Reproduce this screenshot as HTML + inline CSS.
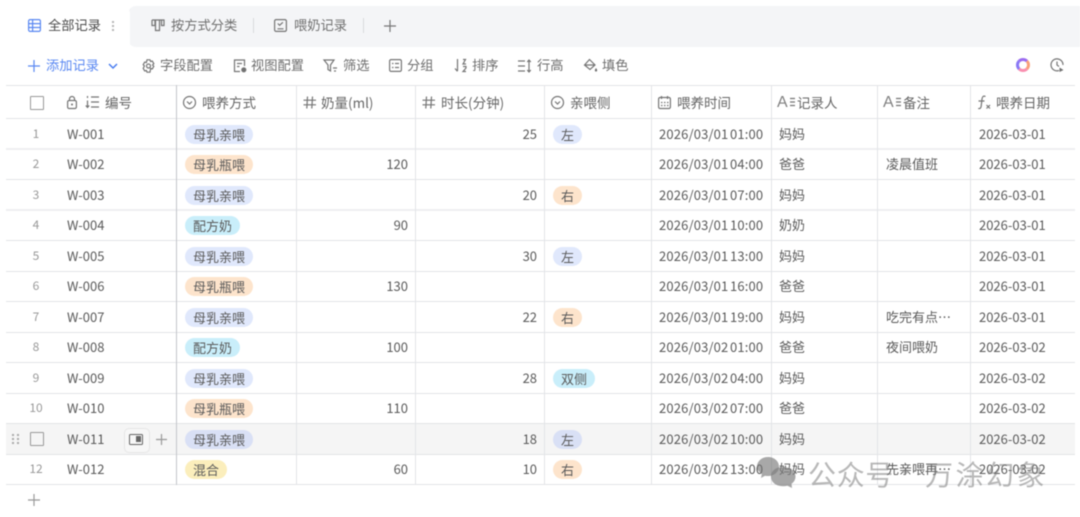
<!DOCTYPE html>
<html><head><meta charset="utf-8">
<style>
html,body{margin:0;padding:0;background:#fff}
body{width:1080px;height:517px;overflow:hidden;position:relative;font-family:"Liberation Sans","Noto Sans CJK SC",sans-serif;font-size:13px;color:#555}
#w{position:absolute;left:0;top:0;width:1080px;height:517px;filter:blur(.45px)}
.a{position:absolute;white-space:nowrap}
.h{position:absolute;left:6px;width:1069px;height:1px;background:#e3e4e7}
.l{height:2px;background:#eeeff1}
.v{position:absolute;top:85px;height:400px;width:1px;background:#e3e4e7}
.t{position:absolute;white-space:nowrap;line-height:18px;height:18px;color:#5a5a5a;font-family:"Noto Sans CJK SC",sans-serif;font-size:13px}
.k{font-size:13.5px;color:#666}
.m{font-size:13.25px;color:#666}
.d{letter-spacing:.15px;word-spacing:-1.5px}
.n{color:#999;font-size:12px;text-align:center;width:24px;left:24px}
.r{text-align:right;width:60px}
.p{position:absolute;height:19px;line-height:19px;border-radius:10px;padding:0 8px;color:#5a5a5a;font-family:"Noto Sans CJK SC",sans-serif;font-size:13px;white-space:nowrap}
.b{background:#e0e8fc}.o{background:#fde4cc}.c{background:#c9eefa}.y{background:#fbeebc}
.tb{position:absolute;top:56px;height:18px;line-height:18px;color:#6e6e6e;font-family:"Noto Sans CJK SC",sans-serif;font-size:13.25px;white-space:nowrap}
.A{position:absolute;top:94px;line-height:18px;font-family:"Liberation Sans",sans-serif;font-size:16px;color:#808080}
svg{position:absolute;overflow:visible;fill:none;stroke:#757575;stroke-width:1.2}
</style></head><body><div id="w">

<!-- tab bar -->
<div class="a" style="left:128px;top:6px;width:952px;height:41px;background:#f4f5f7;border-radius:8px 0 0 8px"></div>
<div class="a" style="left:0;top:6px;width:130px;height:41px;background:#fff;border-radius:0 8px 0 0"></div>
<svg style="left:28px;top:19px" width="13" height="13" viewBox="0 0 13 13"><rect x=".6" y=".6" width="11.800" height="11.800" rx="1.500" stroke="#5a88f2"/><path d="M.6 4.600h11.800M.6 8.500h11.800M4.600 .6v11.800" stroke="#5a88f2"/></svg>
<div class="t m" style="left:48px;top:16px;color:#4c4c4c">全部记录</div>
<div class="a" style="left:112px;top:21px;width:2px;height:2px;background:#b5b5b5;box-shadow:0 4px #b5b5b5,0 8px #b5b5b5"></div>
<svg style="left:151px;top:19px" width="14" height="13" viewBox="0 0 14 13"><path d="M1 1h12v5.500h-2.500V1M1 1v5.500h3V1M4.500 1v10.500h4V1"/></svg>
<div class="t m" style="left:171px;top:16px;color:#707070">按方式分类</div>
<div class="a" style="left:253px;top:18px;width:1px;height:15px;background:#d8d9dc"></div>
<svg style="left:274px;top:19px" width="13" height="13" viewBox="0 0 13 13"><rect x=".6" y=".6" width="11.800" height="11.800" rx="1.500"/><path d="M3.500 9.800h6M3.800 4.500l1.800 1.800 3.300-3"/></svg>
<div class="t m" style="left:294px;top:16px;color:#707070">喂奶记录</div>
<div class="a" style="left:363px;top:18px;width:1px;height:15px;background:#d8d9dc"></div>
<svg style="left:384px;top:20px" width="12" height="12" viewBox="0 0 12 12"><path d="M6 0v12M0 6h12" stroke="#777"/></svg>

<!-- toolbar -->
<svg style="left:28px;top:60px" width="12" height="12" viewBox="0 0 12 12"><path d="M6 0v12M0 6h12" stroke="#5a88f2"/></svg>
<div class="tb" style="left:46px;color:#5a88f2">添加记录</div>
<svg style="left:108px;top:63px" width="10" height="6" viewBox="0 0 10 6"><path d="M1 1l4 4 4-4" stroke="#4a7df0" stroke-width="1.500"/></svg>
<svg style="left:142px;top:59px" width="13" height="14" viewBox="0 0 13 14"><path d="M5 .8h3l.6 1.700 1.700-.4 1.500 2.600-1.200 1.300 1.200 1.300-1.500 2.600-1.700-.4L8 13.200H5l-.6-1.700-1.700.4-1.500-2.600L2.400 7 1.200 5.700l1.500-2.600 1.700.4z"/><circle cx="6.500" cy="7" r="2"/></svg>
<div class="tb" style="left:160px">字段配置</div>
<svg style="left:233px;top:59px" width="14" height="14" viewBox="0 0 14 14"><path d="M7 12.500H1.500V1h10v6M4 4.500h5M4 7.500h2.500"/><circle cx="10.800" cy="10.800" r="2" fill="#707070"/></svg>
<div class="tb" style="left:251px">视图配置</div>
<svg style="left:323px;top:59px" width="15" height="14" viewBox="0 0 15 14"><path d="M1 1h10L7.500 6v6L5 10.500V6zM10 9h4M11 12h2"/></svg>
<div class="tb" style="left:343px">筛选</div>
<svg style="left:389px;top:59px" width="13" height="13" viewBox="0 0 13 13"><rect x=".6" y=".6" width="11.800" height="11.800" rx="1.500"/><path d="M3 4.500h1.500M6 4.500h4M3 8.500h1.500M6 8.500h4"/></svg>
<div class="tb" style="left:407px">分组</div>
<svg style="left:454px;top:58px" width="14" height="15" viewBox="0 0 14 15"><path d="M3.500 1v12M1 10.500l2.500 2.800M9 1.500h2.500l-2.500 4.500h3M9 8.500h3v1.500l-3 3.500h3"/></svg>
<div class="tb" style="left:472px">排序</div>
<svg style="left:518px;top:59px" width="14" height="14" viewBox="0 0 14 14"><path d="M0 2h7M0 7h7M0 12h7M11 1v12M9.200 3L11 1l1.800 2M9.200 11l1.800 2 1.800-2"/></svg>
<div class="tb" style="left:537px">行高</div>
<svg style="left:583px;top:58px" width="15" height="15" viewBox="0 0 15 15"><path d="M6.500 1.500l5.500 5.500-5 4.500L1.500 7zM1.500 7h10.500"/><path d="M13 10c.8 1.200 1.200 1.800 1.200 2.400a1.200 1.200 0 0 1-2.400 0c0-.6.400-1.200 1.200-2.400z" fill="#707070" stroke="none"/></svg>
<div class="tb" style="left:602px">填色</div>
<div class="a" style="left:1016px;top:58px;width:8px;height:8px;border-radius:50%;border:3.500px solid;border-color:#9b6cf0 #f9a07a #f98fb0 #8a78f5"></div>
<svg style="left:1050px;top:58px" width="14" height="15" viewBox="0 0 14 15"><path d="M9 12.500A6 6 0 1 1 13 7M7 3.500V7l2 1.500"/><path d="M9.500 9.500l4 2.500-4 2z" fill="#707070" stroke="none"/></svg>

<!-- row 11 highlight -->
<div class="a" style="left:6px;top:424px;width:1069px;height:30px;background:#f5f5f5"></div>

<!-- grid -->
<div class="h" style="top:85px"></div><div class="h" style="top:118px"></div>
<div class="h l" style="top:148px"></div><div class="h" style="top:179px"></div>
<div class="h l" style="top:209px"></div><div class="h" style="top:240px"></div>
<div class="h" style="top:271px"></div><div class="h" style="top:301px"></div>
<div class="h" style="top:332px"></div><div class="h" style="top:362px"></div>
<div class="h" style="top:393px"></div><div class="h" style="top:423px"></div>
<div class="h" style="top:454px"></div><div class="h" style="top:484px"></div>
<div class="v" style="left:176px;background:#c3c5ca"></div>
<div class="v" style="left:296px"></div><div class="v" style="left:415px"></div>
<div class="v" style="left:544px"></div><div class="v" style="left:651px"></div>
<div class="v" style="left:771px"></div><div class="v" style="left:877px"></div>
<div class="v" style="left:970px"></div>

<!-- header -->
<div class="a" style="left:30px;top:96px;width:12px;height:12px;border:1.300px solid #999;border-radius:1px"></div>
<svg style="left:67px;top:96px" width="10" height="13" viewBox="0 0 10 13"><rect x=".6" y="4.500" width="8.800" height="8" rx="1.500"/><path d="M2.500 4.500V3a2.500 2.500 0 0 1 5 0v1.500"/><circle cx="5" cy="8.500" r="1" fill="#707070" stroke="none"/></svg>
<svg style="left:85px;top:95px" width="15" height="14" viewBox="0 0 15 14"><path d="M2.500 1v2M2.500 5.500v7M.8 10.500l1.700 2 1.700-2M6 2h8M6 7h8M6 12h8"/></svg>
<div class="t k" style="left:105px;top:93px">编号</div>
<svg style="left:183px;top:96px" width="13" height="13" viewBox="0 0 13 13"><circle cx="6.500" cy="6.500" r="6"/><path d="M4 5.500l2.500 2.500L9 5.500"/></svg>
<div class="t k" style="left:202px;top:93px">喂养方式</div>
<svg style="left:303px;top:96px" width="13" height="13" viewBox="0 0 13 13"><path d="M4.500 .5L3.800 12.500M9.500 .5L8.800 12.500M.5 4.200h12.500M.5 8.800h12.500"/></svg>
<div class="t k" style="left:321px;top:93px">奶量(ml)</div>
<svg style="left:422px;top:96px" width="13" height="13" viewBox="0 0 13 13"><path d="M4.500 .5L3.800 12.500M9.500 .5L8.800 12.500M.5 4.200h12.500M.5 8.800h12.500"/></svg>
<div class="t k" style="left:441px;top:93px">时长(分钟)</div>
<svg style="left:551px;top:96px" width="13" height="13" viewBox="0 0 13 13"><circle cx="6.500" cy="6.500" r="6"/><path d="M4 5.500l2.500 2.500L9 5.500"/></svg>
<div class="t k" style="left:570px;top:93px">亲喂侧</div>
<svg style="left:658px;top:96px" width="13" height="13" viewBox="0 0 13 13"><rect x=".6" y="1.500" width="11.800" height="11" rx="1.500"/><path d="M3.500 0v3M9.500 0v3M3 6.500h1.500M6 6.500h1.500M9 6.500h1.500M3 9.500h1.500M6 9.500h1.500M9 9.500h1.500"/></svg>
<div class="t k" style="left:677px;top:93px">喂养时间</div>
<div class="A" style="left:777px">A</div><svg style="left:789px;top:97px" width="7" height="10" viewBox="0 0 7 10"><path d="M1 1.500h5M1 5h5M1 8.500h5"/></svg>
<div class="t k" style="left:797px;top:93px">记录人</div>
<div class="A" style="left:883px">A</div><svg style="left:895px;top:97px" width="7" height="10" viewBox="0 0 7 10"><path d="M1 1.500h5M1 5h5M1 8.500h5"/></svg>
<div class="t k" style="left:903px;top:93px">备注</div>
<svg style="left:977px;top:95px" width="15" height="15" viewBox="0 0 15 15"><path d="M8.500 1.500C6.500 .5 5.300 1.500 5 4L4.200 11c-.2 2-1 2.800-3 2.500M1.500 6h6M9.500 10l3.500 3.500M13 10l-3.500 3.500"/></svg>
<div class="t k" style="left:996px;top:93px">喂养日期</div>

<!-- row 1 -->
<div class="t n" style="top:125px">1</div><div class="t" style="left:67px;top:125px">W-001</div><div class="p b" style="left:185px;top:125px">母乳亲喂</div><div class="t r" style="left:477px;top:125px">25</div><div class="p b" style="left:553px;top:125px">左</div><div class="t d" style="left:659px;top:125px">2026/03/01 01:00</div><div class="t" style="left:779px;top:125px">妈妈</div><div class="t" style="left:979px;top:125px">2026-03-01</div>
<!-- row 2 -->
<div class="t n" style="top:155px">2</div><div class="t" style="left:67px;top:155px">W-002</div><div class="p o" style="left:185px;top:155px">母乳瓶喂</div><div class="t r" style="left:348px;top:155px">120</div><div class="t d" style="left:659px;top:155px">2026/03/01 04:00</div><div class="t" style="left:779px;top:155px">爸爸</div><div class="t" style="left:886px;top:155px">凌晨值班</div><div class="t" style="left:979px;top:155px">2026-03-01</div>
<!-- row 3 -->
<div class="t n" style="top:186px">3</div><div class="t" style="left:67px;top:186px">W-003</div><div class="p b" style="left:185px;top:186px">母乳亲喂</div><div class="t r" style="left:477px;top:186px">20</div><div class="p o" style="left:553px;top:186px">右</div><div class="t d" style="left:659px;top:186px">2026/03/01 07:00</div><div class="t" style="left:779px;top:186px">妈妈</div><div class="t" style="left:979px;top:186px">2026-03-01</div>
<!-- row 4 -->
<div class="t n" style="top:216px">4</div><div class="t" style="left:67px;top:216px">W-004</div><div class="p c" style="left:185px;top:216px">配方奶</div><div class="t r" style="left:348px;top:216px">90</div><div class="t d" style="left:659px;top:216px">2026/03/01 10:00</div><div class="t" style="left:779px;top:216px">奶奶</div><div class="t" style="left:979px;top:216px">2026-03-01</div>
<!-- row 5 -->
<div class="t n" style="top:247px">5</div><div class="t" style="left:67px;top:247px">W-005</div><div class="p b" style="left:185px;top:247px">母乳亲喂</div><div class="t r" style="left:477px;top:247px">30</div><div class="p b" style="left:553px;top:247px">左</div><div class="t d" style="left:659px;top:247px">2026/03/01 13:00</div><div class="t" style="left:779px;top:247px">妈妈</div><div class="t" style="left:979px;top:247px">2026-03-01</div>
<!-- row 6 -->
<div class="t n" style="top:277px">6</div><div class="t" style="left:67px;top:277px">W-006</div><div class="p o" style="left:185px;top:277px">母乳瓶喂</div><div class="t r" style="left:348px;top:277px">130</div><div class="t d" style="left:659px;top:277px">2026/03/01 16:00</div><div class="t" style="left:779px;top:277px">爸爸</div><div class="t" style="left:979px;top:277px">2026-03-01</div>
<!-- row 7 -->
<div class="t n" style="top:308px">7</div><div class="t" style="left:67px;top:308px">W-007</div><div class="p b" style="left:185px;top:308px">母乳亲喂</div><div class="t r" style="left:477px;top:308px">22</div><div class="p o" style="left:553px;top:308px">右</div><div class="t d" style="left:659px;top:308px">2026/03/01 19:00</div><div class="t" style="left:779px;top:308px">妈妈</div><div class="t" style="left:886px;top:308px">吃完有点…</div><div class="t" style="left:979px;top:308px">2026-03-01</div>
<!-- row 8 -->
<div class="t n" style="top:338px">8</div><div class="t" style="left:67px;top:338px">W-008</div><div class="p c" style="left:185px;top:338px">配方奶</div><div class="t r" style="left:348px;top:338px">100</div><div class="t d" style="left:659px;top:338px">2026/03/02 01:00</div><div class="t" style="left:779px;top:338px">爸爸</div><div class="t" style="left:886px;top:338px">夜间喂奶</div><div class="t" style="left:979px;top:338px">2026-03-02</div>
<!-- row 9 -->
<div class="t n" style="top:369px">9</div><div class="t" style="left:67px;top:369px">W-009</div><div class="p b" style="left:185px;top:369px">母乳亲喂</div><div class="t r" style="left:477px;top:369px">28</div><div class="p c" style="left:553px;top:369px">双侧</div><div class="t d" style="left:659px;top:369px">2026/03/02 04:00</div><div class="t" style="left:779px;top:369px">妈妈</div><div class="t" style="left:979px;top:369px">2026-03-02</div>
<!-- row 10 -->
<div class="t n" style="top:399px">10</div><div class="t" style="left:67px;top:399px">W-010</div><div class="p o" style="left:185px;top:399px">母乳瓶喂</div><div class="t r" style="left:348px;top:399px">110</div><div class="t d" style="left:659px;top:399px">2026/03/02 07:00</div><div class="t" style="left:779px;top:399px">爸爸</div><div class="t" style="left:979px;top:399px">2026-03-02</div>
<!-- row 11 -->
<div class="a" style="left:12px;top:434px;width:2px;height:2px;background:#aaa;box-shadow:5px 0 #aaa,0 4px #aaa,5px 4px #aaa,0 8px #aaa,5px 8px #aaa"></div>
<div class="a" style="left:30px;top:432px;width:12px;height:12px;border:1.300px solid #999;border-radius:1px"></div>
<div class="t" style="left:67px;top:430px">W-011</div>
<div class="a" style="left:124px;top:428px;width:24px;height:23px;background:#f7f7f7;border:1px solid #e6e6e6;border-radius:5px"></div>
<div class="a" style="left:129px;top:434px;width:12px;height:9px;border:1.300px solid #666;border-radius:1.500px"></div>
<div class="a" style="left:136px;top:436px;width:5px;height:6px;background:#666"></div>
<svg style="left:156px;top:434px" width="11" height="11" viewBox="0 0 11 11"><path d="M5.500 0v11M0 5.500h11" stroke="#999"/></svg>
<div class="p b" style="left:185px;top:430px;background:#d9e0f5">母乳亲喂</div><div class="t r" style="left:477px;top:430px">18</div><div class="p b" style="left:553px;top:430px;background:#d9e0f5">左</div><div class="t d" style="left:659px;top:430px">2026/03/02 10:00</div><div class="t" style="left:779px;top:430px">妈妈</div><div class="t" style="left:979px;top:430px">2026-03-02</div>
<!-- row 12 -->
<div class="t n" style="top:460px">12</div><div class="t" style="left:67px;top:460px">W-012</div><div class="p y" style="left:185px;top:460px">混合</div><div class="t r" style="left:348px;top:460px">60</div><div class="t r" style="left:477px;top:460px">10</div><div class="p o" style="left:553px;top:460px">右</div><div class="t d" style="left:659px;top:460px">2026/03/02 13:00</div><div class="t" style="left:779px;top:460px">妈妈</div><div class="t" style="left:886px;top:460px">先亲喂再…</div><div class="t" style="left:979px;top:460px">2026-03-02</div>

<svg style="left:28px;top:494px" width="12" height="12" viewBox="0 0 12 12"><path d="M6 0v12M0 6h12" stroke="#999"/></svg>

<!-- watermark -->
<svg style="left:757px;top:457px;stroke:none" width="39" height="32" viewBox="0 0 39 32"><path d="M11 0c6 0 11 4 11 9.500S17 19 11 19c-1 0-2 0-3-.3L4 21l.8-4C2 15 0 12.500 0 9.500 0 4 5 0 11 0z" fill="rgba(115,115,115,.62)"/><path d="M26 10c7 0 12.500 4 12.500 9.500 0 3-1.500 5.500-4 7.300L35 31l-4.500-2.200c-1.400.3-3 .4-4.500.4-7 0-12-4-12-9.700S19 10 26 10z" fill="rgba(125,125,125,.68)"/></svg>
<div class="a" style="left:808px;top:455px;font-size:28px;line-height:38px;letter-spacing:.7px;color:rgba(125,125,125,.55);font-family:'Noto Sans CJK SC',sans-serif">公众号</div>
<div class="a" style="left:903px;top:469px;width:5px;height:5px;border-radius:50%;background:rgba(125,125,125,.55)"></div>
<div class="a" style="left:925px;top:455px;font-size:28px;line-height:38px;letter-spacing:2.500px;color:rgba(125,125,125,.55);font-family:'Noto Sans CJK SC',sans-serif">万涂幻象</div>
</div></body></html>
